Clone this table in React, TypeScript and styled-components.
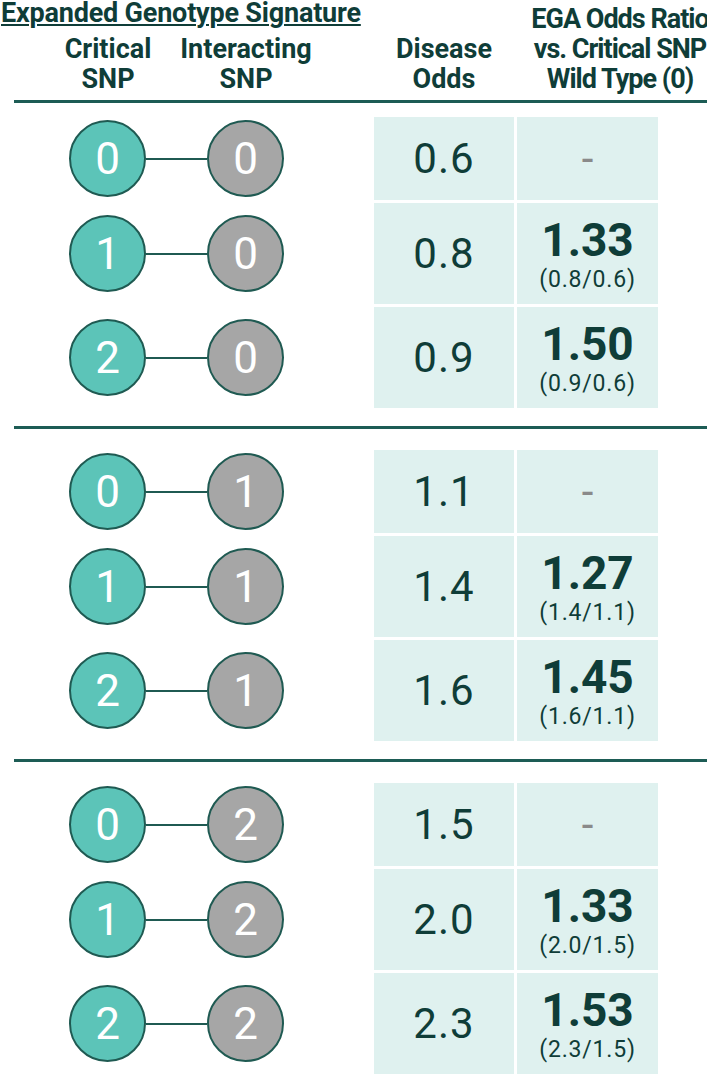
import React from 'react';
import styled, {createGlobalStyle} from 'styled-components';

const GlobalStyle = createGlobalStyle`
  html, body {
    margin: 0;
    padding: 0;
    background: #ffffff;
  }
  body {
    font-family: Roboto, "Liberation Sans", sans-serif;
    color: #0f3d38;
    overflow-x: hidden;
  }
`

const INK = '#0f3d38'
const RULE = '#1d5c55'

const Page = styled.div`
  width: 707px;
  overflow: hidden;
`

const Header = styled.div`
  display: flex;
  align-items: flex-end;
  height: 100px;
  font-family: Roboto, sans-serif;
  font-stretch: 88%;
  font-weight: 700;
  font-size: 27px;
  line-height: 30px;
  color: ${INK};
`

const HeaderLeft = styled.div`
  width: 374px;
  flex-shrink: 0;
  display: flex;
  flex-direction: column;
  align-self: stretch;
  justify-content: space-between;
  padding-bottom: 6px;
  box-sizing: border-box;
`

const Title = styled.div`
  font-size: 27px;
  line-height: 26px;
  padding-left: 1px;
  text-decoration: underline;
  text-decoration-thickness: 2px;
  text-underline-offset: 2px;
  white-space: nowrap;
  letter-spacing: -0.2px;
`

const SubHeads = styled.div`
  display: flex;
  padding-left: 69px;
`

const HeadCell = styled.div<{width: number, shift?: number, tight?: boolean}>`
  width: ${props => props.width}px;
  margin-left: ${props => props.shift || 0}px;
  letter-spacing: ${props => props.tight ? -1 : 0}px;
  text-align: center;
  white-space: nowrap;
  display: flex;
  flex-direction: column;
  align-items: center;
  flex-shrink: 0;
`

const HeadRight = styled.div`
  display: flex;
  align-items: flex-end;
  flex-shrink: 0;
  padding-bottom: 6px;
`

const Rule = styled.div`
  height: 3px;
  margin-left: 14px;
  background: ${RULE};
`

const Group = styled.div<{first?: boolean}>`
  display: flex;
  flex-direction: column;
  gap: 3px;
  padding: ${props => props.first ? 14 : 21}px 0 18px;
`

const Row = styled.div<{tall: boolean}>`
  display: flex;
  height: ${props => props.tall ? 101 : 83}px;
`

const Pair = styled.div`
  width: 374px;
  padding-left: 69px;
  box-sizing: border-box;
  display: flex;
  align-items: center;
`

const Node = styled.div<{kind: 'critical' | 'interacting'}>`
  width: 77px;
  height: 77px;
  border-radius: 50%;
  box-sizing: border-box;
  border: 2px solid #1f5a52;
  background: ${props => props.kind === 'critical' ? '#5cc4b8' : '#a6a6a6'};
  color: #ffffff;
  font-size: 44px;
  font-weight: 400;
  display: flex;
  align-items: center;
  justify-content: center;
  flex-shrink: 0;
`

const Link = styled.div`
  width: 61px;
  height: 2px;
  background: #1f5a52;
`

const Cells = styled.div`
  display: flex;
  gap: 3px;
`

const Cell = styled.div<{width: number}>`
  width: ${props => props.width}px;
  background: #dff1ef;
  display: flex;
  flex-direction: column;
  align-items: center;
  justify-content: center;
  color: ${INK};
`

const Odds = styled.div`
  font-size: 42px;
  line-height: 44px;
  letter-spacing: 1px;
`

const Ratio = styled.div`
  font-size: 46px;
  font-weight: 700;
  line-height: 52px;
`

const Calc = styled.div`
  font-size: 23px;
  line-height: 27px;
  letter-spacing: 0.8px;
`

const Dash = styled.div`
  font-size: 42px;
  line-height: 44px;
  color: #8a8a8a;
`

type Entry = {critical: number, interacting: number, odds: string, ratio?: string, calc?: string}

const groups: Entry[][] = [
    [
        {critical: 0, interacting: 0, odds: '0.6'},
        {critical: 1, interacting: 0, odds: '0.8', ratio: '1.33', calc: '(0.8/0.6)'},
        {critical: 2, interacting: 0, odds: '0.9', ratio: '1.50', calc: '(0.9/0.6)'},
    ],
    [
        {critical: 0, interacting: 1, odds: '1.1'},
        {critical: 1, interacting: 1, odds: '1.4', ratio: '1.27', calc: '(1.4/1.1)'},
        {critical: 2, interacting: 1, odds: '1.6', ratio: '1.45', calc: '(1.6/1.1)'},
    ],
    [
        {critical: 0, interacting: 2, odds: '1.5'},
        {critical: 1, interacting: 2, odds: '2.0', ratio: '1.33', calc: '(2.0/1.5)'},
        {critical: 2, interacting: 2, odds: '2.3', ratio: '1.53', calc: '(2.3/1.5)'},
    ],
]

const SignatureRow = ({entry}: {entry: Entry}) => (
    <Row tall={!!entry.ratio}>
        <Pair>
            <Node kind="critical">{entry.critical}</Node>
            <Link/>
            <Node kind="interacting">{entry.interacting}</Node>
        </Pair>
        <Cells>
            <Cell width={140}><Odds>{entry.odds}</Odds></Cell>
            <Cell width={141}>
                {entry.ratio
                    ? <><Ratio>{entry.ratio}</Ratio><Calc>{entry.calc}</Calc></>
                    : <Dash>-</Dash>}
            </Cell>
        </Cells>
    </Row>
)

const App = () => {
    return (
        <Page>
            <GlobalStyle/>
            <Header>
                <HeaderLeft>
                    <Title>Expanded Genotype Signature</Title>
                    <SubHeads>
                        <HeadCell width={78}><span>Critical</span><span>SNP</span></HeadCell>
                        <HeadCell width={78} shift={60}><span>Interacting</span><span>SNP</span></HeadCell>
                    </SubHeads>
                </HeaderLeft>
                <HeadRight>
                    <HeadCell width={140}><span>Disease</span><span>Odds</span></HeadCell>
                    <HeadCell width={206} shift={3} tight>
                        <span>EGA Odds Ratio</span><span>vs. Critical SNP</span><span>Wild Type (0)</span>
                    </HeadCell>
                </HeadRight>
            </Header>
            {groups.map((group, i) => (
                <React.Fragment key={i}>
                    <Rule/>
                    <Group first={i === 0}>
                        {group.map((entry, j) => <SignatureRow key={j} entry={entry}/>)}
                    </Group>
                </React.Fragment>
            ))}
        </Page>
    );
};

export default App;
